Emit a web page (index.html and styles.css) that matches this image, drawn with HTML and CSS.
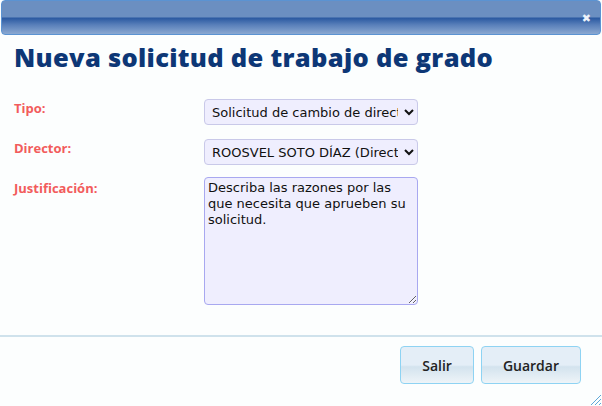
FILE: index.html
```html
<!DOCTYPE html>
<html lang="es">
<head>
    <meta charset="UTF-8">
    <meta name="viewport" content="width=device-width, initial-scale=1.0">
    <title>Nueva solicitud</title>
    <link rel="stylesheet" href="styles.css">
</head>
<body>

    <div class="dialog">
        <div class="titlebar">
            <span class="close">&#10006;</span>
        </div>

        <div class="content">
            <h1>Nueva solicitud de trabajo de grado</h1>

            <div class="form">
                <label class="label" for="tipo">Tipo:</label>
                <select class="field" id="tipo">
                    <option>Solicitud de cambio de director</option>
                </select>

                <label class="label" for="director">Director:</label>
                <select class="field" id="director">
                    <option>ROOSVEL SOTO DÍAZ (Director)</option>
                </select>

                <label class="label" for="justificacion">Justificación:</label>
                <textarea class="field area" id="justificacion">Describa las razones por las que necesita que aprueben su solicitud.</textarea>
            </div>
        </div>

        <div class="buttonpane">
            <button class="btn">Salir</button>
            <button class="btn">Guardar</button>
        </div>

        <svg class="resize" width="12" height="12" viewBox="0 0 12 12">
            <path d="M11 1 L1 11 M11 5 L5 11 M11 9 L9 11" stroke="#5fa8d8" stroke-width="1" fill="none"/>
        </svg>
    </div>

</body>
</html>
```

FILE: styles.css
```css
* {
    margin: 0;
    padding: 0;
    box-sizing: border-box;
}

body {
    font-family: "Open Sans", Arial, sans-serif;
    background-color: #fcfefe;
    width: 602px;
    height: 406px;
    overflow: hidden;
}

.dialog {
    position: relative;
    height: 406px;
    display: flex;
    flex-direction: column;
}

.titlebar {
    height: 35px;
    margin: 0 1px;
    border: 1px solid #5b93d2;
    border-radius: 4px;
    background: linear-gradient(to bottom, #6b8fc1 0px, #6b8fc1 16px, #2a59a1 17px, #5a80ba 24px, #8aa8d1 33px);
    display: flex;
    justify-content: flex-end;
    align-items: center;
    padding-right: 9px;
}

.close {
    color: #eef3fa;
    font-family: "DejaVu Sans", sans-serif;
    font-size: 11px;
    font-weight: bold;
    margin-top: 2px;
}

.content {
    padding: 5px 14px 0 14px;
    flex: 1;
}

h1 {
    color: #0d3776;
    font-family: "Open Sans", sans-serif;
    font-weight: 800;
    font-size: 25.5px;
    line-height: 34px;
    letter-spacing: 0.3px;
}

.form {
    display: grid;
    grid-template-columns: 190px 214px;
    row-gap: 14px;
    margin-top: 25px;
}

.label {
    color: #f25c5c;
    font-weight: bold;
    font-size: 13px;
    line-height: 18px;
}

.field {
    width: 214px;
    height: 26px;
    background-color: #efeefe;
    border: 1px solid #c9c9e9;
    border-radius: 4px;
    font-family: "DejaVu Sans", Verdana, sans-serif;
    font-size: 13px;
    color: #111;
    padding: 0 3px;
}

.area {
    height: 128px;
    margin-top: -2px;
    padding: 2px 6px 2px 3px;
    border-color: #a8a8f0;
    font-size: 13px;
    line-height: 16px;
    resize: both;
}

.buttonpane {
    border-top: 2px solid #cfe2ec;
    height: 71px;
    display: flex;
    justify-content: flex-end;
    align-items: flex-start;
    gap: 7px;
    padding: 9px 21px 0 0;
}

.btn {
    height: 38px;
    padding: 0 21px;
    border: 1px solid #8ed3f3;
    border-radius: 4px;
    background: linear-gradient(to bottom, #e4eef7 0%, #e4eef7 50%, #d3e3ee 55%, #eef4f8 100%);
    font-family: "Open Sans", sans-serif;
    font-weight: 600;
    font-size: 14px;
    color: #222;
}

.resize {
    position: absolute;
    right: 0;
    bottom: 0;
}
```
